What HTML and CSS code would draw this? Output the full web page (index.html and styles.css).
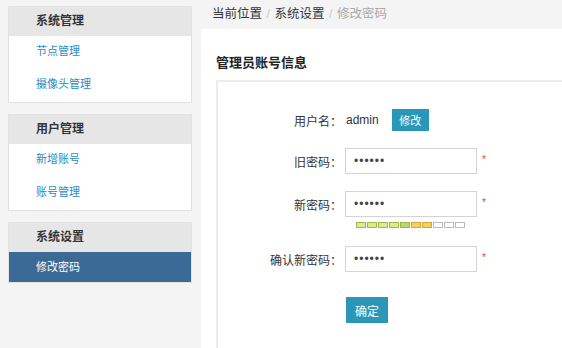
FILE: index.html
```html
<!DOCTYPE html>
<html lang="zh">
<head>
    <meta charset="UTF-8">
    <title>修改密码</title>
    <link rel="stylesheet" href="styles.css">
</head>
<body>
    <div class="sidebar">
        <div class="menu-group">
            <div class="menu-title">系统管理</div>
            <a class="menu-item">节点管理</a>
            <a class="menu-item">摄像头管理</a>
        </div>
        <div class="menu-group">
            <div class="menu-title">用户管理</div>
            <a class="menu-item">新增账号</a>
            <a class="menu-item">账号管理</a>
        </div>
        <div class="menu-group">
            <div class="menu-title">系统设置</div>
            <a class="menu-item active">修改密码</a>
        </div>
    </div>

    <div class="main">
        <div class="breadcrumb">
            <span>当前位置</span>
            <span class="sep">/</span>
            <span>系统设置</span>
            <span class="sep">/</span>
            <span class="current">修改密码</span>
        </div>

        <div class="panel">
            <h3>管理员账号信息</h3>
            <div class="form-box">
                <div class="form-row">
                    <label>用户名：</label>
                    <span class="username">admin</span>
                    <button class="btn small-btn">修改</button>
                </div>
                <div class="form-row">
                    <label>旧密码：</label>
                    <input type="password" value="123456">
                    <span class="required">*</span>
                </div>
                <div class="form-row">
                    <label>新密码：</label>
                    <input type="password" value="123456">
                    <span class="required">*</span>
                </div>
                <div class="strength">
                    <i class="on"></i><i class="on"></i><i class="on"></i><i class="on"></i><i class="on strong"></i>
                    <i class="warn"></i><i class="warn"></i>
                    <i></i><i></i><i></i>
                </div>
                <div class="form-row confirm-row">
                    <label>确认新密码：</label>
                    <input type="password" value="123456">
                    <span class="required">*</span>
                </div>
                <div class="form-actions">
                    <button class="btn submit-btn">确定</button>
                </div>
            </div>
        </div>
    </div>
</body>
</html>
```

FILE: styles.css
```css
body {
    margin: 0;
    font-family: 'Liberation Sans', 'Noto Sans CJK SC', sans-serif;
    font-size: 12px;
    color: #333;
    background: #f4f4f4;
    display: flex;
    height: 348px;
    overflow: hidden;
}

/* 左侧菜单 */
.sidebar {
    width: 184px;
    margin: 6px 8px 0 8px;
    display: flex;
    flex-direction: column;
    gap: 11px;
}

.menu-group {
    border: 1px solid #e2e2e2;
    background: #fff;
}

.menu-title {
    height: 29px;
    line-height: 29px;
    padding-left: 27px;
    background: #e6e6e6;
    font-weight: bold;
    font-size: 12px;
    color: #333;
}

.menu-item {
    display: block;
    height: 33px;
    line-height: 31px;
    padding-left: 27px;
    font-size: 11px;
    color: #2a8cc4;
}

.menu-item.active {
    height: 30px;
    line-height: 30px;
    background: #3c6a96;
    color: #fff;
}

/* 右侧内容 */
.main {
    flex: 1;
    display: flex;
    flex-direction: column;
}

.breadcrumb {
    height: 29px;
    line-height: 28px;
    padding-left: 12px;
    font-size: 12.5px;
    color: #333;
}

.breadcrumb .sep {
    color: #ccc;
    margin: 0 1px;
}

.breadcrumb .current {
    color: #aaa;
}

.panel {
    flex: 1;
    display: flex;
    flex-direction: column;
    background: #fff;
    margin-left: 1px;
    padding: 0 0 0 15px;
}

.panel h3 {
    margin: 0;
    padding-top: 25px;
    height: 26px;
    font-size: 13px;
    line-height: 18px;
    color: #222;
}

.form-box {
    flex: 1;
    border-top: 2px solid #ececec;
    border-left: 2px solid #ececec;
    padding-top: 27px;
}

.form-row {
    display: flex;
    align-items: center;
    height: 26px;
    margin-bottom: 17px;
}

.form-row:first-child {
    height: 22px;
}

.form-row label {
    width: 124px;
    text-align: right;
    font-size: 12px;
    color: #333;
}

.username {
    margin-left: 4px;
    font-size: 12px;
    color: #333;
}

.btn {
    border: none;
    color: #fff;
    background: #2b97b8;
    font-family: inherit;
    cursor: pointer;
}

.small-btn {
    margin-left: 13px;
    width: 37px;
    height: 22px;
    font-size: 11px;
    padding: 0;
}

.form-row input {
    width: 132px;
    height: 26px;
    box-sizing: border-box;
    margin-left: 3px;
    border: 1px solid #d4d4d4;
    padding: 0 8px;
    font-size: 12px;
    color: #444;
    letter-spacing: 1px;
}

.required {
    color: #d44;
    font-size: 10px;
    margin-left: 5px;
    margin-top: -4px;
}

.strength {
    display: flex;
    gap: 1px;
    margin: -12px 0 18px 138px;
    height: 6px;
}

.strength i {
    width: 8px;
    height: 4px;
    border: 1px solid #bbb;
    background: #fff;
    box-sizing: content-box;
}

.strength i.on {
    background: #d8ec8c;
    border-color: #9dbb4c;
}

.strength i.strong {
    background: #b9d96a;
}

.strength i.warn {
    background: #f5d25a;
    border-color: #d7a63a;
}

.confirm-row {
    margin-bottom: 25px;
}

.form-actions {
    padding-left: 128px;
}

.submit-btn {
    width: 42px;
    height: 26px;
    font-size: 12px;
    padding: 0;
}
```
